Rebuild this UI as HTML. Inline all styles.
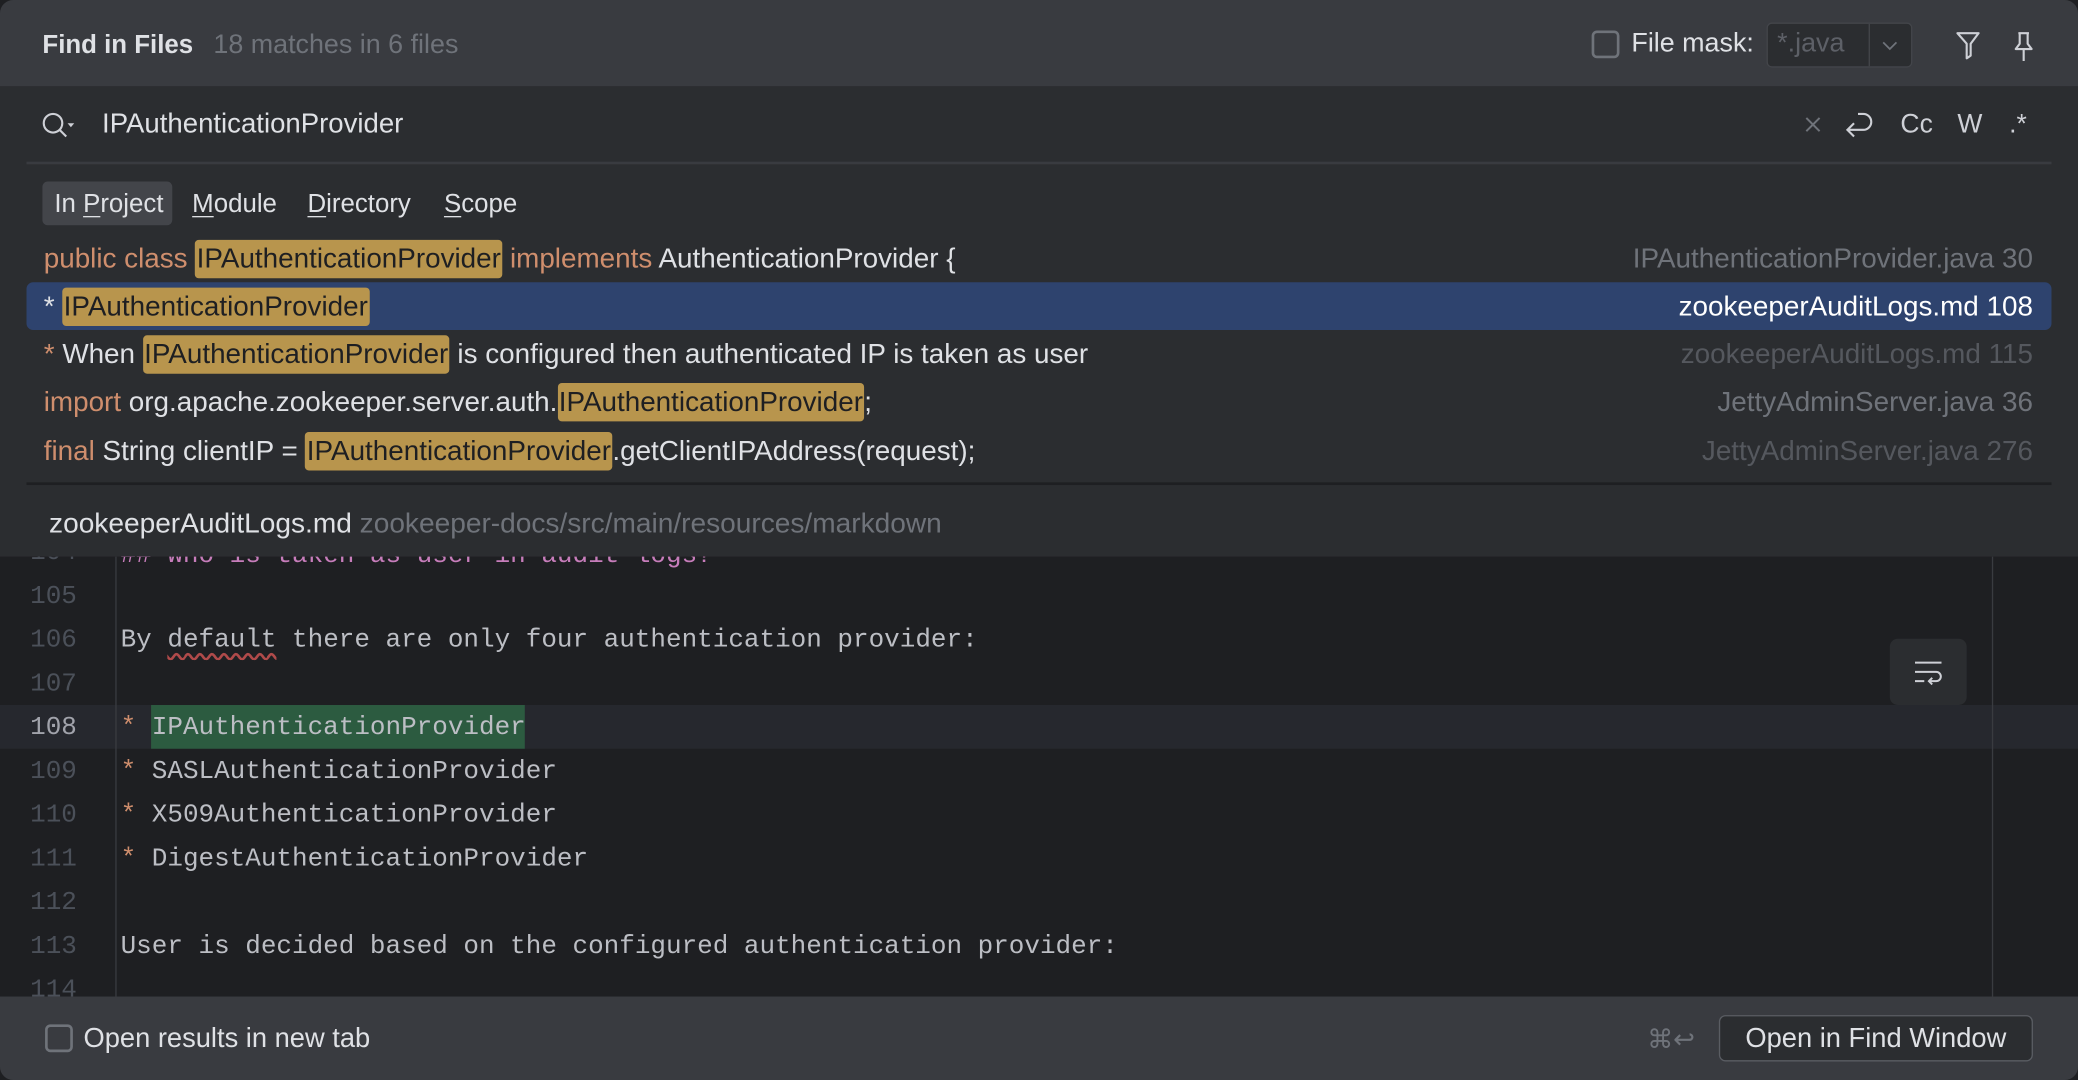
<!DOCTYPE html>
<html><head><meta charset="utf-8"><style>
*{margin:0;padding:0;box-sizing:border-box}
html,body{width:2078px;height:1080px;overflow:hidden;background:#1e1f22}
#w{position:absolute;left:0;top:0;width:1568px;height:815px;transform:scale(1.32526,1.3252);transform-origin:0 0;background:#2b2d30;border-radius:10px;overflow:hidden;font-family:"Liberation Sans",sans-serif;color:#dfe1e5}
.a{position:absolute;white-space:nowrap}
.hdr{left:0;top:0;width:1568px;height:65px;background:#393b40}
.ui{font-size:19.5px}
.g{color:#6f737a}
.k{color:#cf8e6d}
.hl{background:#b8954d;color:#1e1f22;border-radius:3px;padding:3px 1px}
.row{left:33px;font-size:21px;line-height:36px;height:36px}
.rf{right:34px;font-size:21px;line-height:36px;color:#6f737a;text-align:right}
.ed{left:0;top:420px;width:1568px;height:332px;background:#1e1f22;overflow:hidden}
.ln{left:0;width:58px;text-align:right;font-family:"Liberation Mono",monospace;font-size:19.6px;color:#4b5059;line-height:33px}
.cd{left:91px;font-family:"Liberation Mono",monospace;font-size:19.6px;line-height:33px;color:#bcbec4}
u{text-decoration:underline;text-underline-offset:3px}
</style></head><body><div id="w">
<div class="a hdr"></div>
<div class="a ui" style="left:32px;top:23px;font-weight:bold;font-size:19.5px">Find in Files</div>
<div class="a g" style="left:161px;top:23px;font-size:20.3px">18 matches in 6 files</div>
<div class="a" style="left:1201px;top:23px;width:21px;height:21px;border:2px solid #6f737a;border-radius:4px"></div>
<div class="a" style="left:1231px;top:22px;font-size:20.3px">File mask:</div>
<div class="a" style="left:1333px;top:17px;width:110px;height:34px;background:#2b2d30;border:1px solid #43454a;border-radius:4px"></div>
<div class="a" style="left:1410px;top:18px;width:1px;height:32px;background:#43454a"></div>
<div class="a" style="left:1341px;top:22px;color:#5d6067;font-size:20.3px">*.java</div>
<svg class="a" style="left:1419px;top:28px" width="14" height="12"><path d="M2 4l5 5 5-5" fill="none" stroke="#6f737a" stroke-width="1.3"/></svg>
<svg class="a" style="left:1474px;top:22px" width="22" height="24"><path d="M3 3h16l-6 8v9l-3 2V11z" fill="none" stroke="#ced0d6" stroke-width="1.6" stroke-linejoin="round"/></svg>
<svg class="a" style="left:1516px;top:22px" width="22" height="26"><path d="M7 3h8M8 3v8l-3 4h12l-3-4V3M11 15v9" fill="none" stroke="#ced0d6" stroke-width="1.6" stroke-linejoin="round"/></svg>

<svg class="a" style="left:30px;top:83px" width="28" height="24"><circle cx="10" cy="10" r="7" fill="none" stroke="#ced0d6" stroke-width="1.6"/><path d="M15 15l5 5" stroke="#ced0d6" stroke-width="1.6"/><path d="M21 10h5l-2.5 3z" fill="#ced0d6"/></svg>
<div class="a" style="left:77px;top:82px;font-size:20.8px">IPAuthenticationProvider</div>
<svg class="a" style="left:1361px;top:87px" width="14" height="14"><path d="M2 2l10 10M12 2L2 12" stroke="#6f737a" stroke-width="1.5"/></svg>
<svg class="a" style="left:1390px;top:82px" width="26" height="26"><path d="M12 4h4a6 6 0 0 1 0 12H4M9 11l-5 5 5 5" fill="none" stroke="#ced0d6" stroke-width="1.6"/></svg>
<div class="a" style="left:1434px;top:83px;font-size:20px;color:#ced0d6">Cc</div>
<div class="a" style="left:1477px;top:83px;font-size:20px;color:#ced0d6">W</div>
<div class="a" style="left:1516px;top:83px;font-size:20px;color:#ced0d6">.*</div>
<div class="a" style="left:20px;top:122px;width:1528px;height:2px;background:#393b40"></div>

<div class="a" style="left:32px;top:137px;width:98px;height:33px;background:#43454a;border-radius:4px"></div>
<div class="a ui" style="left:41px;top:143px">In <u>P</u>roject</div>
<div class="a ui" style="left:145px;top:143px"><u>M</u>odule</div>
<div class="a ui" style="left:232px;top:143px"><u>D</u>irectory</div>
<div class="a ui" style="left:335px;top:143px"><u>S</u>cope</div>

<div class="a" style="left:20px;top:213px;width:1528px;height:36px;background:#2e436e;border-radius:5px"></div>
<div class="a row" style="top:178px"><span class="k">public class </span><span class="hl">IPAuthenticationProvider</span><span class="k"> implements</span> AuthenticationProvider {</div>
<div class="a rf" style="top:178px">IPAuthenticationProvider.java 30</div>
<div class="a row" style="top:214px">* <span class="hl">IPAuthenticationProvider</span></div>
<div class="a rf" style="top:214px;color:#fff">zookeeperAuditLogs.md 108</div>
<div class="a row" style="top:250px"><span class="k">*</span> When <span class="hl">IPAuthenticationProvider</span> is configured then authenticated IP is taken as user</div>
<div class="a rf" style="top:250px;color:#55585e">zookeeperAuditLogs.md 115</div>
<div class="a row" style="top:286px"><span class="k">import</span> org.apache.zookeeper.server.auth.<span class="hl">IPAuthenticationProvider</span>;</div>
<div class="a rf" style="top:286px">JettyAdminServer.java 36</div>
<div class="a row" style="top:323px"><span class="k">final</span> String clientIP = <span class="hl">IPAuthenticationProvider</span>.getClientIPAddress(request);</div>
<div class="a rf" style="top:323px;color:#55585e">JettyAdminServer.java 276</div>
<div class="a" style="left:20px;top:364px;width:1528px;height:2px;background:#1e1f22"></div>
<div class="a" style="left:37px;top:384px;font-size:21.2px">zookeeperAuditLogs.md <span class="g">zookeeper-docs/src/main/resources/markdown</span></div>

<div class="a ed">
<div class="a" style="left:0;top:112px;width:1568px;height:33px;background:#26282e"></div>
<div class="a" style="left:87px;top:0;width:1px;height:332px;background:#393b40"></div>
<div class="a" style="left:1503px;top:0;width:1px;height:332px;background:#393b40"></div>
<div class="a" style="left:114px;top:112px;width:282px;height:33px;background:#2c5b40"></div>
<div class="a ln" style="top:-19px">104</div>
<div class="a ln" style="top:14px">105</div>
<div class="a ln" style="top:47px">106</div>
<div class="a ln" style="top:80px">107</div>
<div class="a ln" style="top:113px;color:#a1a3ab">108</div>
<div class="a ln" style="top:146px">109</div>
<div class="a ln" style="top:179px">110</div>
<div class="a ln" style="top:212px">111</div>
<div class="a ln" style="top:245px">112</div>
<div class="a ln" style="top:278px">113</div>
<div class="a ln" style="top:311px">114</div>
<div class="a cd" style="top:-17px;color:#c77dbb">## Who is taken as user in audit logs?</div>
<div class="a cd" style="top:47px">By <span style="text-decoration:underline wavy #b04a4a;text-underline-offset:4px">default</span> there are only four authentication provider:</div>
<div class="a cd" style="top:113px"><span class="k">*</span> IPAuthenticationProvider</div>
<div class="a cd" style="top:146px"><span class="k">*</span> SASLAuthenticationProvider</div>
<div class="a cd" style="top:179px"><span class="k">*</span> X509AuthenticationProvider</div>
<div class="a cd" style="top:212px"><span class="k">*</span> DigestAuthenticationProvider</div>
<div class="a cd" style="top:278px">User is decided based on the configured authentication provider:</div>
<div class="a" style="left:1426px;top:62px;width:58px;height:50px;background:#2b2d30;border-radius:6px"></div>
<svg class="a" style="left:1443px;top:77px" width="26" height="22"><path d="M2 3h20M2 10h16a3.5 3.5 0 0 1 0 7h-5M15 14.5l-2.5 2.5 2.5 2.5M2 17h7" fill="none" stroke="#ced0d6" stroke-width="1.5"/></svg>
</div>

<div class="a" style="left:0;top:752px;width:1568px;height:63px;background:#393b40"></div>
<div class="a" style="left:34px;top:773px;width:21px;height:21px;border:2px solid #6f737a;border-radius:4px"></div>
<div class="a" style="left:63px;top:772px;font-size:20.6px">Open results in new tab</div>
<div class="a ui" style="left:1243px;top:773px;color:#6f737a">⌘↩</div>
<div class="a" style="left:1297px;top:766px;width:237px;height:35px;border:1px solid #5a5d63;border-radius:5px;background:#2b2d30"></div>
<div class="a" style="left:1317px;top:772px;font-size:20.6px">Open in Find Window</div>
</div></body></html>
